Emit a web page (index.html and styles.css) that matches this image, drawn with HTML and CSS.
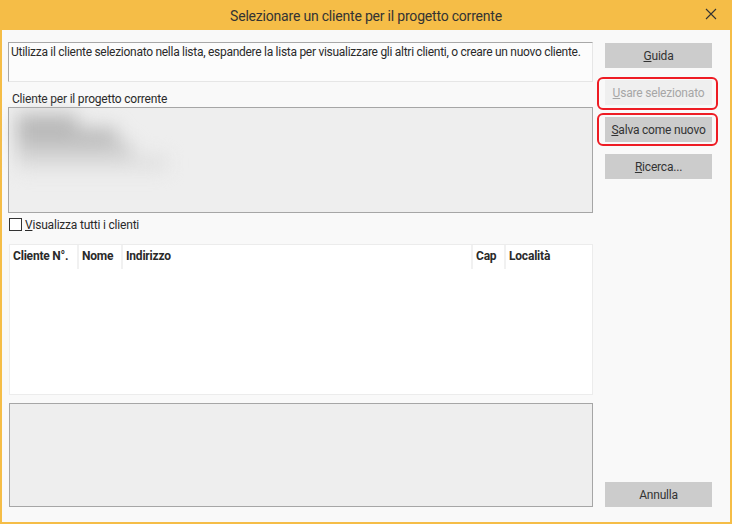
FILE: index.html
```html
<!DOCTYPE html>
<html lang="it">
<head>
    <meta charset="UTF-8">
    <title>Selezionare un cliente per il progetto corrente</title>
    <link rel="stylesheet" href="styles.css">
</head>
<body>
    <div class="window">
        <div class="titlebar">
            <span class="title">Selezionare un cliente per il progetto corrente</span>
            <svg class="close" width="12" height="12" viewBox="0 0 12 12">
                <path d="M1 1 L11 11 M11 1 L1 11" stroke="#333" stroke-width="1.1" fill="none"/>
            </svg>
        </div>

        <div class="content">
            <div class="main">
                <div class="hint">Utilizza il cliente selezionato nella lista, espandere la lista per visualizzare gli altri clienti, o creare un nuovo cliente.</div>

                <div class="field-label">Cliente per il progetto corrente</div>
                <div class="current">
                    <div class="blur-lines">
                        <span class="blur" style="width: 60px"></span>
                        <span class="blur" style="width: 100px"></span>
                        <span class="blur mid" style="width: 115px"></span>
                        <span class="blur faint" style="width: 150px"></span>
                    </div>
                </div>

                <label class="check-row">
                    <span class="checkbox"></span>
                    <span><u>V</u>isualizza tutti i clienti</span>
                </label>

                <div class="list">
                    <div class="list-head">
                        <div class="col col-no">Cliente N°.</div>
                        <div class="col col-name">Nome</div>
                        <div class="col col-addr">Indirizzo</div>
                        <div class="col col-cap">Cap</div>
                        <div class="col col-loc">Località</div>
                    </div>
                </div>

                <div class="details"></div>
            </div>

            <div class="side">
                <button class="btn"><u>G</u>uida</button>
                <button class="btn disabled marked marked-top"><u>U</u>sare selezionato</button>
                <button class="btn marked"><u>S</u>alva come nuovo</button>
                <button class="btn"><u>R</u>icerca...</button>
                <div class="spacer"></div>
                <button class="btn">Annulla</button>
            </div>
        </div>
    </div>
</body>
</html>
```

FILE: styles.css
```css
body {
    margin: 0;
    font-family: Roboto, "Noto Sans", sans-serif;
    font-size: 12px;
    letter-spacing: -0.2px;
    color: #2a2a2a;
    background: #ffffff;
}
.window {
    width: 732px;
    height: 524px;
    box-sizing: border-box;
    border: 2px solid #f5bd47;
    border-top: 0;
    background: #f9f9f9;
    display: flex;
    flex-direction: column;
}
.titlebar {
    height: 30px;
    flex: none;
    background: #f5bd47;
    display: flex;
    align-items: center;
    justify-content: center;
    position: relative;
    padding-top: 1px;
    box-sizing: border-box;
}
.title {
    font-size: 14px;
    color: #333;
}
.close {
    position: absolute;
    right: 13px;
    top: 8px;
}
.content {
    flex: 1;
    display: flex;
    padding: 12px 17px 15px 6px;
    gap: 12px;
}
.main {
    width: 585px;
    display: flex;
    flex-direction: column;
}
.hint {
    border: 1px solid #e6e6e6;
    border-top-color: #a8a8a8;
    border-left-color: #a8a8a8;
    background: #fcfcfc;
    padding: 2px 2px 0 2px;
    box-sizing: border-box;
    height: 40px;
    line-height: 15px;
    letter-spacing: -0.28px;
    white-space: nowrap;
    overflow: hidden;
}
.field-label {
    margin-top: 9px;
    padding-left: 4px;
    line-height: 16px;
}
.current {
    height: 106px;
    box-sizing: border-box;
    border: 1px solid #a6a6a6;
    background: #eeeeee;
    padding: 6px 8px;
}
.blur-lines {
    display: flex;
    flex-direction: column;
    gap: 0;
    filter: blur(9px);
}
.blur {
    display: block;
    height: 14px;
    background: #b9b9b9;
}
.blur.mid {
    background: #cbcbcb;
}
.blur.faint {
    background: #dedede;
}
.check-row {
    display: flex;
    align-items: center;
    gap: 3px;
    margin-top: 5px;
    padding-left: 1px;
    height: 13px;
}
.checkbox {
    width: 11px;
    height: 11px;
    border: 1px solid #333;
    background: #fff;
}
.list {
    margin-top: 13px;
    margin-left: 1px;
    height: 151px;
    box-sizing: border-box;
    border: 1px solid #ececec;
    background: #ffffff;
}
.list-head {
    display: flex;
    height: 24px;
    font-weight: bold;
}
.col {
    padding: 4px 0 0 3px;
    border-right: 2px solid #f1f1f1;
    box-sizing: border-box;
    white-space: nowrap;
}
.col-no { width: 69px; }
.col-name { width: 44px; }
.col-addr { width: 350px; }
.col-cap { width: 33px; }
.col-loc { flex: 1; border-right: 0; }
.details {
    margin-top: 8px;
    margin-left: 1px;
    flex: 1;
    border: 1px solid #a6a6a6;
    background: #eeeeee;
}
.side {
    width: 107px;
    display: flex;
    flex-direction: column;
    gap: 12px;
    padding-top: 1px;
}
.spacer {
    flex: 1;
}
.btn {
    height: 25px;
    border: 0;
    background: #cccccc;
    color: #333;
    font-family: inherit;
    font-size: 12px;
    letter-spacing: inherit;
    padding: 0;
    position: relative;
}
.btn.disabled {
    background: #efefef;
    color: #a6a6a6;
}
.marked::after {
    content: "";
    position: absolute;
    top: -4px;
    bottom: -4px;
    left: -8px;
    right: -6px;
    border: 2px solid #ee1c24;
    border-radius: 6px;
}
.marked-top::after {
    top: -3px;
    bottom: -5px;
}
```
